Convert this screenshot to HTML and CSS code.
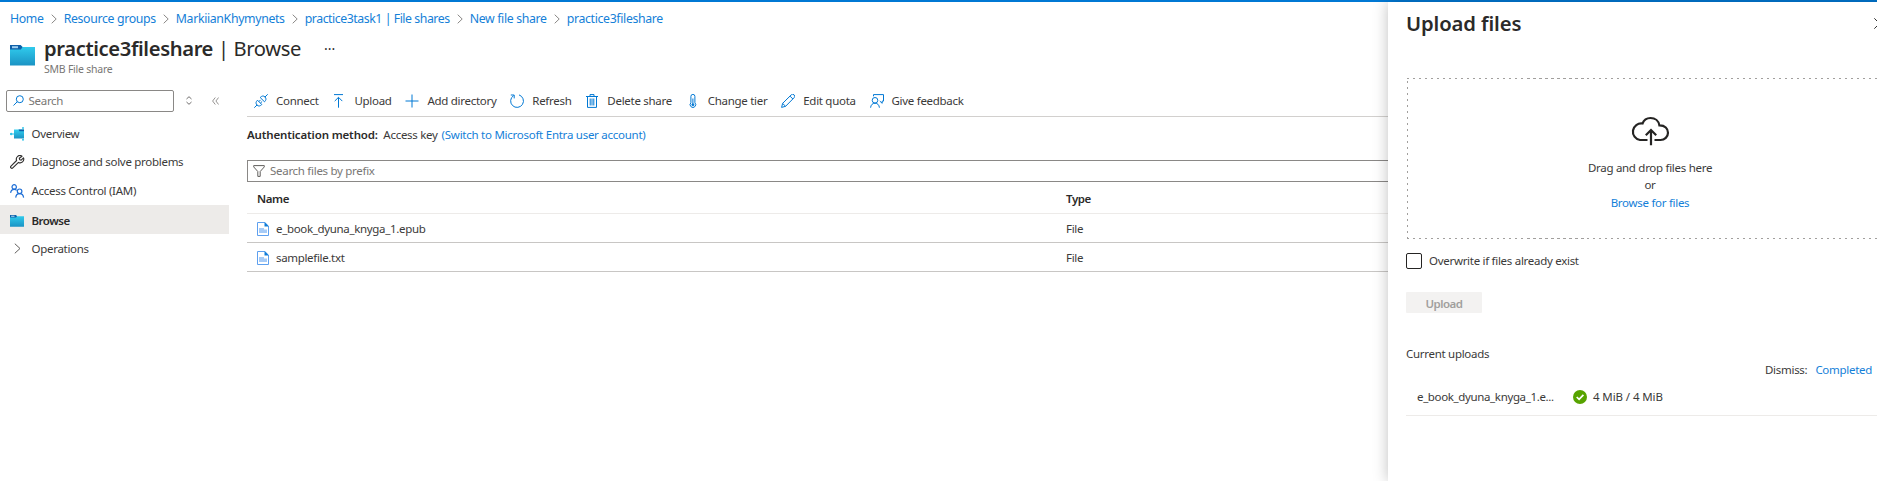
FILE: index.html
```html
<!DOCTYPE html>
<html lang="en">
<head>
<meta charset="utf-8">
<title>practice3fileshare | Browse</title>
<link rel="stylesheet" href="styles.css">
</head>
<body>
<svg class="defs" width="0" height="0" aria-hidden="true">
  <defs>
    <linearGradient id="folder-fill" x1="0" y1="0" x2="0" y2="1">
      <stop offset="0" stop-color="#32d0f0"/><stop offset="1" stop-color="#1b93c4"/>
    </linearGradient>
    <symbol id="folder" viewBox="0 0 25 21" preserveAspectRatio="none">
      <path d="M0 0h10.500l2 2H25v18.500H0z" fill="url(#folder-fill)"/>
      <path d="M0 0h10.500l2 2-1.600 2.500H0z" fill="#0f5fa8"/>
      <rect x="2" y="1.200" width="6" height="2" fill="#9fd0f0"/>
    </symbol>
    <symbol id="crumb-sep" viewBox="0 0 6 10"><path d="M.7.700 5.200 5 .7 9.300" fill="none" stroke="#8a8886"/></symbol>
    <symbol id="file" viewBox="0 0 12 14">
      <path d="M.5.500h7.300l3.700 3.700v9.300H.5z" fill="#fff" stroke="#5ea0ef"/>
      <path d="M7.500 0 12 4.500H7.500z" fill="#0f7cd8"/>
      <path d="M2 6h5v1.500h3V11H2z" fill="#a6cbf7"/>
    </symbol>
  </defs>
</svg>

<div class="topbar"></div>
<nav class="breadcrumb">
  <a>Home</a><svg><use href="#crumb-sep"/></svg>
  <a>Resource groups</a><svg><use href="#crumb-sep"/></svg>
  <a>MarkiianKhymynets</a><svg><use href="#crumb-sep"/></svg>
  <a class="tight">practice3task1 | File shares</a><svg><use href="#crumb-sep"/></svg>
  <a>New file share</a><svg><use href="#crumb-sep"/></svg>
  <a>practice3fileshare</a>
</nav>

<header class="blade-header">
  <svg class="blade-icon"><use href="#folder"/></svg>
  <div>
    <h1><b>practice3fileshare</b> | Browse <span class="more">···</span></h1>
    <p class="subtitle">SMB File share</p>
  </div>
</header>

<div class="content">
  <aside class="sidebar">
    <div class="menu-search">
      <div class="search-box">
        <svg width="11" height="11" viewBox="0 0 11 11" fill="none" stroke="#0078d4"><circle cx="6.800" cy="4.200" r="3.500"/><path d="M4.300 6.700.5 10.500"/></svg>
        <span>Search</span>
      </div>
      <svg class="sort" width="6" height="9" viewBox="0 0 6 9" fill="none" stroke="#605e5c" stroke-width=".9"><path d="M.5 3 3 .700 5.500 3M.5 6 3 8.300 5.500 6"/></svg>
      <svg class="collapse" width="7" height="8" viewBox="0 0 7 8" fill="none" stroke="#8a8886" stroke-width=".9"><path d="M3.300.500.6 4l2.700 3.500M6.600.500 3.900 4l2.700 3.500"/></svg>
    </div>
    <ul class="menu">
      <li class="first">
        <svg width="15" height="14" viewBox="0 0 15 14"><path d="M4 2.500h10v9H4z" fill="url(#folder-fill)"/><path d="M8.500 2.500H14v1.800H9.500z" fill="#0f5fa8"/><path d="M0 7h4" stroke="#32c5ea" stroke-width="1"/><circle cx="1.200" cy="7" r="1.200" fill="#32c5ea"/><circle cx="13" cy="1" r="1" fill="#32c5ea"/><circle cx="13" cy="12.800" r="1" fill="#32c5ea"/></svg>
        Overview
      </li>
      <li>
        <svg width="15" height="14" viewBox="0 0 15 14" fill="none" stroke="#323130" stroke-width="1.150" stroke-linejoin="round"><path d="M12 1.200A3.600 3.600 0 0 0 6.600 5.500L1 11.100a1.200 1.200 0 0 0 1.800 1.800l5.700-5.500a3.600 3.600 0 0 0 5-4.500l-2.300 2.200-1.500-.4-.4-1.500z"/></svg>
        Diagnose and solve problems
      </li>
      <li>
        <svg width="15" height="14" viewBox="0 0 15 14" fill="none" stroke="#1f6fd6" stroke-width="1.200"><circle cx="4.200" cy="2.900" r="2.200"/><path d="M.6 8.900c.3-2.300 1.700-3.600 3.600-3.600 1 0 1.900.400 2.500 1"/><circle cx="9.600" cy="7.300" r="2.300"/><path d="M5.700 13.600c.3-2.400 1.900-3.900 3.900-3.900s3.700 1.500 4 3.900"/></svg>
        Access Control (IAM)
      </li>
      <li class="selected">
        <svg width="14" height="12"><use href="#folder"/></svg>
        Browse
      </li>
      <li class="group">
        <svg width="7" height="11" viewBox="0 0 7 11" fill="none" stroke="#605e5c"><path d="M.8.700 6 5.500.8 10.300"/></svg>
        Operations
      </li>
    </ul>
  </aside>

  <main class="main">
    <div class="toolbar">
      <button><svg viewBox="0 0 14 14"><path d="M.3 13.700 3 11M11 3 13.700.300M3.500 6.200c-1.700 1.700-2 3.200-.5 4.800s3.100 1.200 4.800-.5zM10.500 7.800c1.700-1.700 2-3.200.5-4.800S7.900 1.800 6.200 3.500zM4.900 7.600l1.600-1.700M6.400 9.100 8.100 7.500"/></svg>Connect</button>
      <button><svg viewBox="0 0 14 14"><path d="M2 .600h9M6.500 13.700V3.500M2.700 7.100l3.800-3.800 3.800 3.800"/></svg>Upload</button>
      <button><svg viewBox="0 0 14 14"><path d="M7 .500v13M.5 7h13"/></svg>Add directory</button>
      <button><svg viewBox="0 0 14 14"><path d="M9 .900A6.400 6.400 0 1 1 3.600 1.600M.8 1h3.400v3.400"/></svg>Refresh</button>
      <button><svg viewBox="0 0 14 14"><path d="M1 2.500h12M5 2.300V.600h4v1.700M2.500 2.700v10.700h9V2.700M5.200 4.500v7M7 4.500v7M8.800 4.500v7"/></svg>Delete share</button>
      <button><svg viewBox="0 0 14 14"><path d="M4.900 8.700V2.400a2 2 0 0 1 4 0v6.300a2.800 2.800 0 1 1-4 0z"/><circle cx="6.900" cy="10.800" r="1" class="solid"/><path d="M6.900 4.500v6"/></svg>Change tier</button>
      <button><svg viewBox="0 0 14 14"><path d="m.6 13.400 1-4L10.200.900a1.700 1.700 0 0 1 2.900 2.800L4.600 12.300zM9 2.100l2.900 2.900M1.600 9.400l3 2.900"/></svg>Edit quota</button>
      <button><svg viewBox="0 0 14 14"><path d="M3.500 2.300V.600h10v6.500h-1.300v2.200L9.800 7.100M.6 13.700c.2-2.800 1.900-4.500 4.400-4.500s4.200 1.700 4.400 4.500"/><circle cx="5" cy="6.300" r="2.800"/></svg>Give feedback</button>
    </div>
    <p class="auth"><b>Authentication method:</b><span>Access key</span><a>(Switch to Microsoft Entra user account)</a></p>
    <div class="filter">
      <svg width="12" height="12" viewBox="0 0 12 12" fill="none" stroke="#605e5c"><path d="M.7.600h10.600v1.300L7.200 6.500v4.900H4.800V6.500L.7 1.900z"/></svg>
      <span>Search files by prefix</span>
    </div>
    <div class="table">
      <div class="row head"><span>Name</span><span>Type</span></div>
      <div class="row"><span><svg><use href="#file"/></svg>e_book_dyuna_knyga_1.epub</span><span>File</span></div>
      <div class="row"><span><svg><use href="#file"/></svg>samplefile.txt</span><span>File</span></div>
    </div>
  </main>
</div>

<section class="panel">
  <div class="panel-head">
    <h2>Upload files</h2>
    <svg width="11" height="11" viewBox="0 0 11 11" fill="none" stroke="#323130"><path d="m.3.300 10.400 10.400M10.700.300.3 10.700"/></svg>
  </div>
  <div class="dropzone">
    <svg width="40" height="30" viewBox="0 0 40 30" fill="none" stroke="#252423" stroke-width="2.200"><path d="M17.500 24H10A8.300 8.300 0 1 1 12.500 7.500C14 3.500 17 2 20.500 2c4.700 0 8.200 3 8.900 7.400C35 9.300 38 12.700 38 16.700S34.600 24 30.500 24h-6"/><path d="M21 29.300V14.500M15.800 19.200l5.200-5.200 5.200 5.200"/></svg>
    <span>Drag and drop files here</span>
    <span>or</span>
    <a>Browse for files</a>
  </div>
  <label class="overwrite"><i class="checkbox"></i>Overwrite if files already exist</label>
  <button class="upload-btn" disabled>Upload</button>
  <p class="current">Current uploads</p>
  <p class="dismiss">Dismiss:<a>Completed</a></p>
  <div class="upload-row">
    <span class="upload-name">e_book_dyuna_knyga_1.e...</span>
    <svg width="14" height="14" viewBox="0 0 14 14"><circle cx="7" cy="7" r="7" fill="#57a300"/><path d="m3.700 7 2.400 2.400 4.300-4.500" fill="none" stroke="#fff" stroke-width="1.700"/></svg>
    <span class="upload-size">4 MiB / 4 MiB</span>
  </div>
</section>
</body>
</html>
```
FILE: styles.css
```css
* { box-sizing: border-box; }
body {
  margin: 0;
  height: 481px;
  position: relative;
  overflow: hidden;
  background: #fff;
  color: #3b3a39;
  font: 11.5px/18px "Noto Sans", sans-serif;
  letter-spacing: -0.29px;
}
svg { flex: none; display: block; }
.defs { position: absolute; }
p, h1, h2, ul { margin: 0; padding: 0; }
a { color: #1480d8; }
b { font-weight: 600; }

.topbar { height: 2px; background: #0078d4; }

.breadcrumb {
  display: flex;
  align-items: center;
  height: 33px;
  padding-left: 10px;
  font-size: 12.3px;
  letter-spacing: -0.34px;
  white-space: nowrap;
}
.breadcrumb svg { width: 6px; height: 10px; margin: 0 7px; }
.breadcrumb .tight { letter-spacing: -0.45px; }

.blade-header { display: flex; height: 54px; padding-left: 10px; }
.blade-icon { width: 25px; height: 21px; margin: 10px 9px 0 0; }
h1 {
  font-size: 20.2px;
  line-height: 26px;
  font-weight: 400;
  letter-spacing: -0.38px;
  color: #2b2a29;
  white-space: nowrap;
}
.more { font-size: 14px; margin-left: 18px; letter-spacing: 0; position: relative; top: -2px; }
.subtitle { color: #797775; font-size: 10.500px; line-height: 15px; letter-spacing: -0.24px; margin-top: -2px; }

.content { display: flex; }
.sidebar { width: 229px; flex: none; }
.menu-search { display: flex; align-items: center; height: 23px; padding-left: 6px; }
.search-box {
  display: flex;
  align-items: center;
  gap: 5px;
  width: 168px;
  height: 22px;
  padding: 0 5.500px;
  border: 1px solid #8a8886;
  border-radius: 2px;
  color: #797775;
}
.sort { margin-left: 11.500px; }
.collapse { margin-left: 20px; }
.menu { list-style: none; margin-top: 6px; }
.menu li { display: flex; align-items: center; height: 29px; padding-left: 10px; white-space: nowrap; }
.menu li svg { margin-right: 6.500px; }
.menu li.first { padding-top: 2px; }
.menu li.selected { background: #edebe9; padding-top: 2px; font-weight: 600; letter-spacing: -0.5px; color: #2b2a29; }
.menu li.selected svg { margin-right: 7.500px; }
.menu li.group svg { margin: 0 10.500px 0 4px; }

.main { flex: 1; margin-left: 18px; }
.toolbar {
  display: flex;
  gap: 13.850px;
  height: 28px;
  padding: 1px 0 4px 7px;
  border-bottom: 1px solid #d2d0ce;
}
.toolbar button {
  display: flex;
  align-items: center;
  gap: 8px;
  padding: 0;
  border: 0;
  background: none;
  color: inherit;
  font: inherit;
  letter-spacing: inherit;
  white-space: nowrap;
}
.toolbar svg { width: 14px; height: 14px; fill: none; stroke: #0078d4; }
.toolbar .solid { fill: #0078d4; }
.auth { display: flex; height: 43px; padding-top: 9px; }
.auth b { color: #2b2a29; letter-spacing: -0.15px; }
.auth span { margin: 0 4px 0 5.500px; }
.auth a { letter-spacing: -0.26px; }
.filter {
  display: flex;
  align-items: center;
  gap: 5px;
  height: 22px;
  padding-left: 5px;
  border: 1px solid #8a8886;
  color: #797775;
}
.row {
  display: grid;
  grid-template-columns: 809px 1fr;
  align-items: center;
  height: 29px;
  padding: 1px 0 0 10px;
  border-bottom: 1px solid #c8c6c4;
}
.row.head { height: 32px; padding-top: 3px; border-color: #edebe9; font-weight: 600; letter-spacing: -0.4px; color: #2b2a29; }
.row > span { display: flex; align-items: center; gap: 7px; }
.row:not(.head) > span { letter-spacing: -0.33px; }
.row svg { width: 12px; height: 14px; }

/* Flyout over the blade; its right edge runs past the window. */
.panel {
  position: absolute;
  top: 2px;
  left: 1388px;
  width: 524px;
  height: 479px;
  padding: 8px 19px 0 18px;
  background: #fff;
  box-shadow: 0 0 14px rgba(0, 0, 0, .25);
}
.panel-head { display: flex; align-items: center; height: 26px; }
h2 { font-size: 20.300px; line-height: 26px; font-weight: 600; letter-spacing: -0.12px; color: #2b2a29; width: 468px; }
.dropzone {
  --dash: #a19f9d 0 2.5px, transparent 2.5px 6px;
  display: flex;
  flex-direction: column;
  align-items: center;
  height: 161px;
  margin: 42px 0 0 1px;
  padding-top: 38px;
  line-height: 17.500px;
  background:
    repeating-linear-gradient(90deg, var(--dash)) top / 100% 1px no-repeat,
    repeating-linear-gradient(90deg, var(--dash)) bottom / 100% 1px no-repeat,
    repeating-linear-gradient(0deg, var(--dash)) left / 1px 100% no-repeat,
    repeating-linear-gradient(0deg, var(--dash)) right / 1px 100% no-repeat;
}
.dropzone svg { margin-bottom: 12.500px; }
.overwrite { display: flex; align-items: center; gap: 7px; height: 18px; margin-top: 13px; }
.checkbox { width: 16px; height: 16px; border: 1px solid #252423; border-radius: 2px; }
.upload-btn {
  display: block;
  width: 76px;
  height: 21px;
  margin-top: 22px;
  padding: 2px 0 0;
  border: 0;
  border-radius: 1px;
  background: #f3f2f1;
  color: #a19f9d;
  font: 600 11.500px/18px "Noto Sans", sans-serif;
  letter-spacing: -0.5px;
}
.current { margin-top: 32px; }
.dismiss { display: flex; gap: 8px; line-height: 14px; margin-left: 359px; }
.upload-row { display: flex; align-items: center; height: 39px; border-bottom: 1px solid #edebe9; padding: 1px 0 0 11px; }
.upload-name { width: 156px; letter-spacing: -0.36px; }
.upload-row svg { margin-right: 6px; }
.upload-size { letter-spacing: -0.1px; }
```
